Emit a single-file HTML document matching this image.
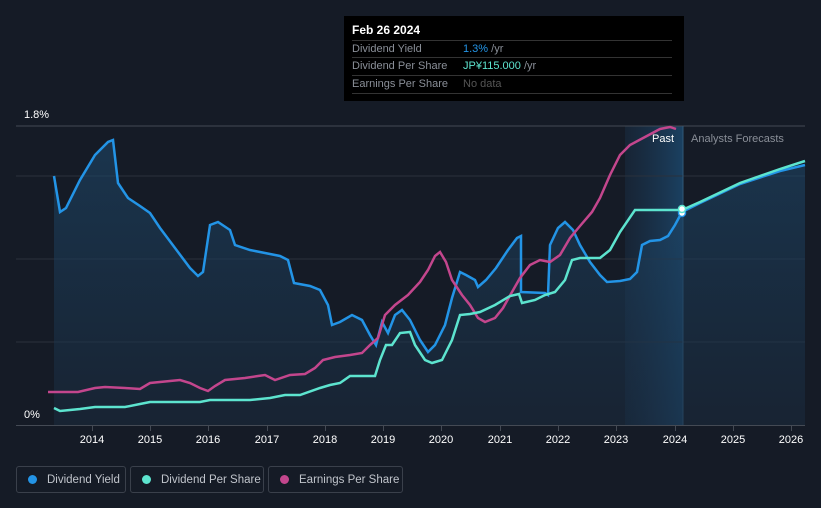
<!DOCTYPE html><html><head><style>
html,body{margin:0;background:#151b26;width:821px;height:508px;overflow:hidden;font-family:"Liberation Sans",sans-serif;position:relative}
.tt{position:absolute;left:344px;top:16px;width:340px;height:85px;background:#000;color:#fff}
.tt .h{position:absolute;left:8px;top:7px;font-size:12px;font-weight:bold}
.row{position:absolute;left:8px;width:320px;border-top:1px solid #333;height:17px;font-size:11px;color:#8a8f98;line-height:17px}
.row span{position:absolute;left:111px}
.lg{position:absolute;top:466px;height:27px;border:1px solid #3a404b;border-radius:3px;color:#c0c4cb;font-size:11.5px;line-height:26px;box-sizing:border-box;white-space:nowrap;overflow:hidden}
.dot{display:inline-block;width:9px;height:9px;border-radius:50%;margin:0 10px 0 11px;vertical-align:-1px}
</style></head><body>
<svg width="821" height="508" style="position:absolute;left:0;top:0">
<defs><linearGradient id="g" x1="0" y1="0" x2="0" y2="1"><stop offset="0" stop-color="#1e4a6e" stop-opacity=".55"/><stop offset="1" stop-color="#1a2c40" stop-opacity=".5"/></linearGradient>
<linearGradient id="p" x1="0" y1="0" x2="1" y2="0"><stop offset="0" stop-color="#1c3a58" stop-opacity=".3"/><stop offset="1" stop-color="#1c4a70" stop-opacity=".8"/></linearGradient></defs>
<rect x="625" y="126" width="58" height="299" fill="url(#p)"/>
<g stroke="#2a313c" stroke-width="1"><line x1="16" y1="126" x2="805" y2="126" stroke="#444a54"/><line x1="16" y1="176" x2="805" y2="176"/><line x1="16" y1="259" x2="805" y2="259"/><line x1="16" y1="342" x2="805" y2="342"/></g>
<line x1="683" y1="126" x2="683" y2="425" stroke="#2f5878"/>
<path fill="url(#g)" d="M54,176 60,212 66,208 80,180 95,155 108,142 113,140 118,183 128,198 140,206 150,213 160,228 175,248 190,268 198,276 203,272 210,225 218,222 230,230 235,245 250,250 265,253 280,256 288,260 294,283 310,286 320,290 328,305 332,325 340,322 352,315 362,320 370,335 376,345 382,322 388,333 395,315 402,310 410,320 420,340 428,352 435,345 445,325 452,298 460,272 466,275 475,280 478,287 486,280 496,268 508,250 517,238 521,236 521,292 545,293 548,295 550,245 558,228 565,222 573,230 580,245 590,262 600,275 607,282 620,281 630,279 637,272 642,245 650,241 660,240 668,236 675,225 682,212 700,203 740,184 780,171 805,165 805,425 54,425Z"/>
<polyline fill="none" stroke="#2394e6" stroke-width="2.5" points="54,176 60,212 66,208 80,180 95,155 108,142 113,140 118,183 128,198 140,206 150,213 160,228 175,248 190,268 198,276 203,272 210,225 218,222 230,230 235,245 250,250 265,253 280,256 288,260 294,283 310,286 320,290 328,305 332,325 340,322 352,315 362,320 370,335 376,345 382,322 388,333 395,315 402,310 410,320 420,340 428,352 435,345 445,325 452,298 460,272 466,275 475,280 478,287 486,280 496,268 508,250 517,238 521,236 521,292 545,293 548,295 550,245 558,228 565,222 573,230 580,245 590,262 600,275 607,282 620,281 630,279 637,272 642,245 650,241 660,240 668,236 675,225 682,212 700,203 740,184 780,171 805,165"/>
<polyline fill="none" stroke="#c3468d" stroke-width="2.5" points="48,392 78,392 95,388 105,387 125,388 140,389 150,383 170,381 180,380 190,383 200,388 208,391 215,386 225,380 245,378 258,376 265,375 275,380 290,375 305,374 315,368 323,360 335,357 350,355 362,353 370,345 378,338 385,315 395,305 408,295 420,282 428,270 435,256 440,252 446,262 452,280 462,295 470,305 478,318 485,322 495,318 503,308 512,292 520,278 530,265 540,260 550,262 560,255 570,238 580,226 592,212 600,198 610,175 620,155 630,145 645,137 660,129 670,127 676,129"/>
<polyline fill="none" stroke="#5de4cf" stroke-width="2.5" points="54,408 60,411 70,410 80,409 95,407 125,407 140,404 150,402 200,402 210,400 250,400 270,398 285,395 300,395 320,388 330,385 340,383 350,376 375,376 380,360 386,345 392,345 400,333 410,332 415,345 425,360 432,363 442,360 452,340 460,315 470,314 480,312 495,305 510,296 519,294 522,303 535,300 545,295 555,292 565,280 572,260 580,258 600,258 610,250 620,232 635,210 682,210 700,202 740,183 780,169 805,161"/>
<circle cx="682" cy="213" r="3.5" fill="#fff" stroke="#2394e6" stroke-width="1.5"/>
<circle cx="682" cy="209" r="3.5" fill="#fff" stroke="#5de4cf" stroke-width="1.5"/>
<line x1="16" y1="425.5" x2="805" y2="425.5" stroke="#444a54"/>
<g fill="#444a54"><rect x="92" y="426" width="1" height="5"/><rect x="150" y="426" width="1" height="5"/><rect x="208" y="426" width="1" height="5"/><rect x="267" y="426" width="1" height="5"/><rect x="325" y="426" width="1" height="5"/><rect x="383" y="426" width="1" height="5"/><rect x="441" y="426" width="1" height="5"/><rect x="500" y="426" width="1" height="5"/><rect x="558" y="426" width="1" height="5"/><rect x="616" y="426" width="1" height="5"/><rect x="675" y="426" width="1" height="5"/><rect x="733" y="426" width="1" height="5"/><rect x="791" y="426" width="1" height="5"/></g>
<g fill="#fff" font-size="11" text-anchor="middle"><text x="92" y="443">2014</text><text x="150" y="443">2015</text><text x="208" y="443">2016</text><text x="267" y="443">2017</text><text x="325" y="443">2018</text><text x="383" y="443">2019</text><text x="441" y="443">2020</text><text x="500" y="443">2021</text><text x="558" y="443">2022</text><text x="616" y="443">2023</text><text x="675" y="443">2024</text><text x="733" y="443">2025</text><text x="791" y="443">2026</text></g>
<text x="24" y="118" fill="#fff" font-size="11">1.8%</text>
<text x="24" y="418" fill="#fff" font-size="11">0%</text>
<text x="652" y="142" fill="#fff" font-size="11">Past</text>
<text x="691" y="142" fill="#8a8f98" font-size="11">Analysts Forecasts</text>
</svg>
<div class="tt"><div class="h">Feb 26 2024</div>
<div class="row" style="top:24px">Dividend Yield<span><b style="font-weight:normal;color:#2394e6">1.3%</b> /yr</span></div>
<div class="row" style="top:41px">Dividend Per Share<span><b style="font-weight:normal;color:#5de4cf">JP¥115.000</b> /yr</span></div>
<div class="row" style="top:59px;border-bottom:1px solid #333">Earnings Per Share<span style="color:#555">No data</span></div></div>
<div class="lg" style="left:16px;width:110px"><span class="dot" style="background:#2394e6"></span>Dividend Yield</div>
<div class="lg" style="left:130px;width:134px"><span class="dot" style="background:#5de4cf"></span>Dividend Per Share</div>
<div class="lg" style="left:268px;width:135px"><span class="dot" style="background:#c3468d"></span>Earnings Per Share</div>
</body></html>
